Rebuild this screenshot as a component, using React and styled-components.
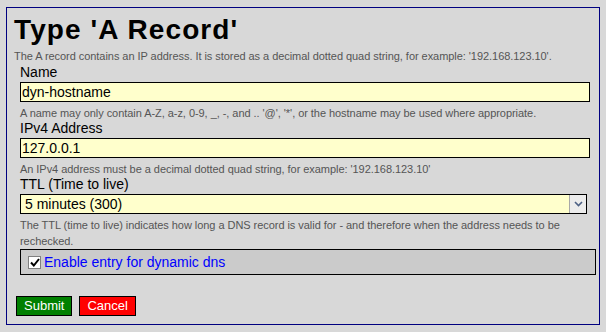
import React from "react";
import styled, { createGlobalStyle } from "styled-components";

const Global = createGlobalStyle`
  html, body { margin: 0; padding: 0; background: #d8d8d8; }
  body { font-family: "Liberation Sans", Arial, sans-serif; color: #000; }
  * { box-sizing: border-box; }
`;

const Panel = styled.div`
  margin: 7px 0 0 6px;
  width: 594px;
  height: 318px;
  border: 1px solid #000080;
  background: #d8d8d8;
  padding: 7px 0 0 7px;
`;

const Title = styled.h1`
  margin: 0;
  font-size: 28px;
  line-height: 30px;
  font-weight: bold;
  letter-spacing: 1.1px;
`;

const Note = styled.div`
  font-size: 11px;
  line-height: 16px;
  color: #555;
  letter-spacing: -0.05px;
  margin-top: ${(p) => p.$top || 0}px;
  width: ${(p) => p.$width || "auto"};
`;

const Form = styled.div`
  margin-left: 6px;
  margin-top: 1px;
  display: flex;
  flex-direction: column;
  align-items: flex-start;
`;

const Label = styled.div`
  font-size: 14px;
  line-height: 15px;
`;

const TextBox = styled.div`
  margin-top: 2px;
  width: ${(p) => p.$width}px;
  height: 20px;
  border: 1px solid #000;
  background: #ffffcc;
  font-size: 14px;
  line-height: 18px;
  padding-left: ${(p) => p.$pad}px;
  display: flex;
  align-items: stretch;
`;

const Value = styled.span`
  flex: 1;
`;

const Arrow = styled.span`
  width: 17px;
  background: #ececec;
  border-left: 1px solid #a8a8a8;
  display: flex;
  align-items: center;
  justify-content: center;
`;

const CheckRow = styled.div`
  width: 576px;
  height: 26px;
  border: 1px solid #000;
  background: #cbcbcb;
  display: flex;
  align-items: center;
  padding-left: 7px;
  gap: 3px;
`;

const Box = styled.span`
  width: 13px;
  height: 13px;
  background: #fff;
  border: 1px solid #808080;
  display: flex;
  align-items: center;
  justify-content: center;
`;

const CheckLabel = styled.span`
  font-size: 14px;
  line-height: 16px;
  color: #0000ff;
`;

const Buttons = styled.div`
  display: flex;
  gap: 7px;
  margin: 21px 0 0 2px;
`;

const Button = styled.div`
  height: 20px;
  padding: 0 7px;
  border: 1px solid #000;
  background: ${(p) => p.$bg};
  color: #fff;
  font-size: 13px;
  line-height: 18px;
`;

export default function App() {
  return (
    <>
      <Global />
      <Panel>
        <Title>Type 'A Record'</Title>
        <Note $top={3}>
          The A record contains an IP address. It is stored as a decimal dotted quad string, for example: '192.168.123.10'.
        </Note>
        <Form>
          <Label>Name</Label>
          <TextBox $width={570} $pad={1}>
            <Value>dyn-hostname</Value>
          </TextBox>
          <Note $top={3}>
            A name may only contain A-Z, a-z, 0-9, _, -, and .. '@', '*', or the hostname may be used where appropriate.
          </Note>
          <Label>IPv4 Address</Label>
          <TextBox $width={570} $pad={1}>
            <Value>127.0.0.1</Value>
          </TextBox>
          <Note $top={3}>
            An IPv4 address must be a decimal dotted quad string, for example: '192.168.123.10'
          </Note>
          <Label>TTL (Time to live)</Label>
          <TextBox $width={567} $pad={4}>
            <Value>5 minutes (300)</Value>
            <Arrow>
              <svg width="9" height="6" viewBox="0 0 9 6">
                <path d="M1 1 L4.5 4.5 L8 1" fill="none" stroke="#4d6185" strokeWidth="1.6" />
              </svg>
            </Arrow>
          </TextBox>
          <Note $top={3} $width="572px">
            The TTL (time to live) indicates how long a DNS record is valid for - and therefore when the address needs to be rechecked.
          </Note>
          <CheckRow>
            <Box>
              <svg width="10" height="9" viewBox="0 0 10 9">
                <path d="M1 4.5 L3.8 7.5 L9 1" fill="none" stroke="#000" strokeWidth="2" />
              </svg>
            </Box>
            <CheckLabel>Enable entry for dynamic dns</CheckLabel>
          </CheckRow>
        </Form>
        <Buttons>
          <Button $bg="#008000">Submit</Button>
          <Button $bg="#ff0000">Cancel</Button>
        </Buttons>
      </Panel>
    </>
  );
}
